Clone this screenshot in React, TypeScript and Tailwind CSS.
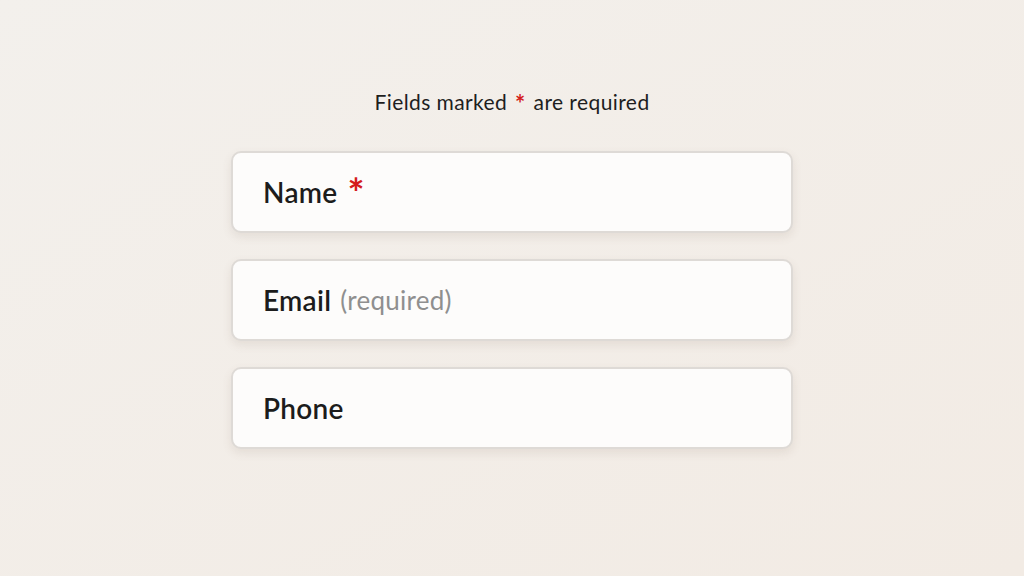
import React from "react";

type Field = {
  label: string;
  mark?: "star" | "text";
};

const FIELDS: Field[] = [
  { label: "Name", mark: "star" },
  { label: "Email", mark: "text" },
  { label: "Phone" },
];

function FieldBox({ label, mark }: Field) {
  return (
    <div className="flex h-[82px] w-[562px] items-center rounded-[10px] border-2 border-[#dedad6] bg-[#fdfcfb] px-[30px] shadow-[0_4px_10px_rgba(120,100,80,0.12)]">
      <span className="text-[28px] font-semibold tracking-[0.01em] text-[#1c1c1c]">{label}</span>
      {mark === "star" && (
        <span className="ml-[10px] mt-[2px] text-[40px] leading-none font-bold text-[#d41c1c]">*</span>
      )}
      {mark === "text" && (
        <span className="ml-[9px] text-[26px] tracking-[0.01em] text-[#8f8f8f]">(required)</span>
      )}
    </div>
  );
}

export default function App() {
  return (
    <div
      className="flex h-[576px] w-[1024px] flex-col items-center bg-gradient-to-br from-[#f3f0ec] to-[#f2ebe4]"
      style={{ fontFamily: "Lato, 'Open Sans', sans-serif" }}
    >
      <p className="mt-[89px] text-[21px] leading-[24px] tracking-[0.02em] text-[#1e1e1e]">
        Fields marked{" "}
        <span className="relative top-[3px] mx-[2px] text-[24px] leading-none font-bold text-[#d41c1c]">*</span>{" "}
        are required
      </p>
      <div className="mt-[37px] flex flex-col gap-[26px]">
        {FIELDS.map((f) => (
          <FieldBox key={f.label} {...f} />
        ))}
      </div>
    </div>
  );
}
